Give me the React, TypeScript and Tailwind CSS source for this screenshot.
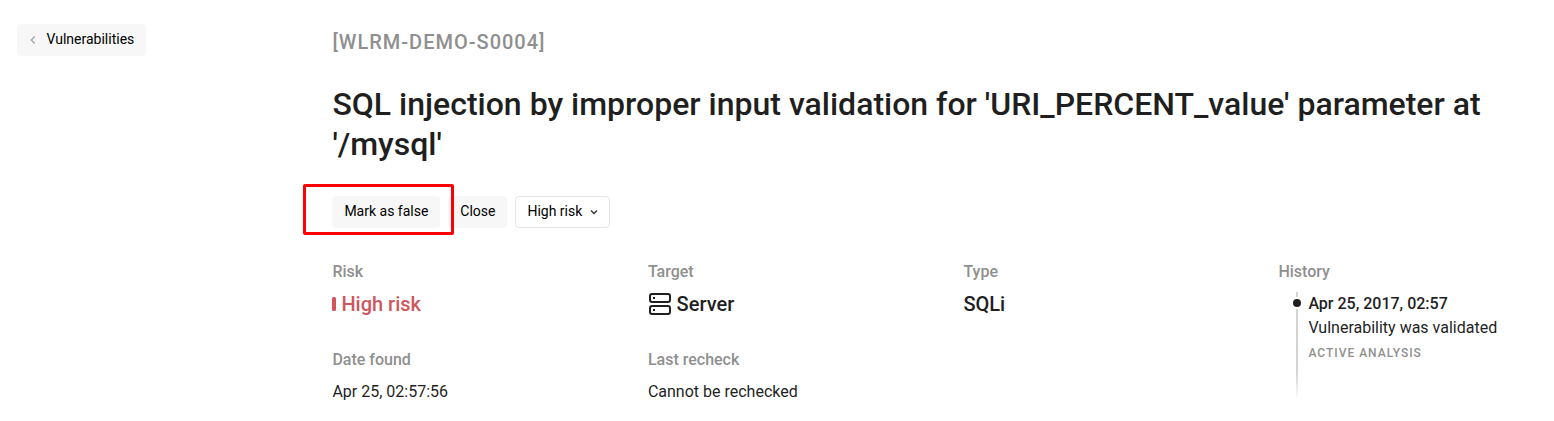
import React from "react";

const label = "text-[16px] leading-[20px] font-medium text-[#8f8f8f]";

export default function App() {
  return (
    <div className="flex h-[421px] w-[1554px] overflow-hidden bg-white font-['Roboto',sans-serif] text-[#1f1f1f]">
      <aside className="w-[332.4px] shrink-0 pt-[24px] pl-[17px]">
        <button className="flex h-[32px] w-[129px] items-center rounded-[4px] bg-[#f7f7f7] pb-[2px] pl-[13px] text-[14px] text-black">
          <svg className="mt-[2px]" width="6" height="8" viewBox="0 0 6 8" fill="none" stroke="#a6a6a6" strokeWidth="1.4"><path d="M4.8.5 1.3 4l3.5 3.5" /></svg>
          <span className="ml-[10.5px]">Vulnerabilities</span>
        </button>
      </aside>
      <main className="w-[1221px] shrink-0">
        <div className="mt-[30px] text-[20px] leading-[24px] font-medium tracking-[1px] text-[#8f8f8f]">[WLRM-DEMO-S0004]</div>
        <h1 className="mt-[30px] w-[1180px] text-[32px] leading-[40px] font-medium">SQL injection by improper input validation for 'URI_PERCENT_value' parameter at '/mysql'</h1>
        <div className="relative mt-[32px] flex h-[32px] text-[14px] text-black">
          <button className="w-[108px] rounded-[4px] bg-[#f7f7f7] pb-[2px]">Mark as false</button>
          <button className="ml-[8px] w-[59px] rounded-[4px] bg-[#f7f7f7] pb-[2px]">Close</button>
          <button className="ml-[8px] flex w-[95px] items-center rounded-[4px] border border-[#e5e5e5] pb-[2px] pl-[11px]">High risk
            <svg className="mt-[2px] ml-[7.5px]" width="8" height="6" viewBox="0 0 8 6" fill="none" stroke="#333" strokeWidth="1.4"><path d="m1 1.5 3 3 3-3" /></svg>
          </button>
          <div className="absolute top-[-12px] left-[-29.4px] h-[51px] w-[151px] rounded-[2px] border-3 border-[#f00]" />
        </div>
        <div className="mt-[34px] grid grid-cols-[315.5px_315.5px_315px_1fr]">
          <section>
            <div className={label}>Risk</div>
            <div className="mt-[10px] flex h-[24px] items-center text-[20px] font-medium text-[#d0555c]"><span className="mr-[5px] h-[14px] w-[4px] rounded-[1.5px] bg-[#d0555c]" />High risk</div>
            <div className={label + " mt-[34px]"}>Date found</div>
            <div className="mt-[12px] text-[16px] leading-[20px]">Apr 25, 02:57:56</div>
          </section>
          <section>
            <div className={label}>Target</div>
            <div className="mt-[10px] flex h-[24px] items-center text-[20px] font-medium">
              <svg className="mr-[4.7px]" width="24" height="24" viewBox="0 0 24 24" fill="none" stroke="#1f1f1f" strokeWidth="2"><rect x="2" y="2" width="20" height="8" rx="2" /><rect x="2" y="14" width="20" height="8" rx="2" /><path d="M5 6h2M5 18h2" /></svg>Server
            </div>
            <div className={label + " mt-[34px]"}>Last recheck</div>
            <div className="mt-[12px] text-[16px] leading-[20px]">Cannot be rechecked</div>
          </section>
          <section>
            <div className={label}>Type</div>
            <div className="mt-[10px] text-[20px] leading-[24px] font-medium">SQLi</div>
          </section>
          <section>
            <div className={label}>History</div>
            <div className="mt-[10px] flex pl-[14px]">
              <div className="flex w-[9px] flex-col items-center">
                <div className="h-[5px] w-[2px] bg-[#d4d4d4]" />
                <div className="mt-[2px] mb-[2px] size-[8px] rounded-full bg-[#1f1f1f]" />
                <div className="h-[91px] w-[2px] bg-linear-to-b from-[#d4d4d4] from-70% to-white" />
              </div>
              <div className="ml-[7px]">
                <div className="text-[16px] leading-[24px] font-medium">Apr 25, 2017, 02:57</div>
                <div className="text-[16px] leading-[24px]">Vulnerability was validated</div>
                <div className="mt-[5px] text-[12px] leading-[16px] font-medium tracking-[1px] text-[#8f8f8f]">ACTIVE ANALYSIS</div>
              </div>
            </div>
          </section>
        </div>
      </main>
    </div>
  );
}
